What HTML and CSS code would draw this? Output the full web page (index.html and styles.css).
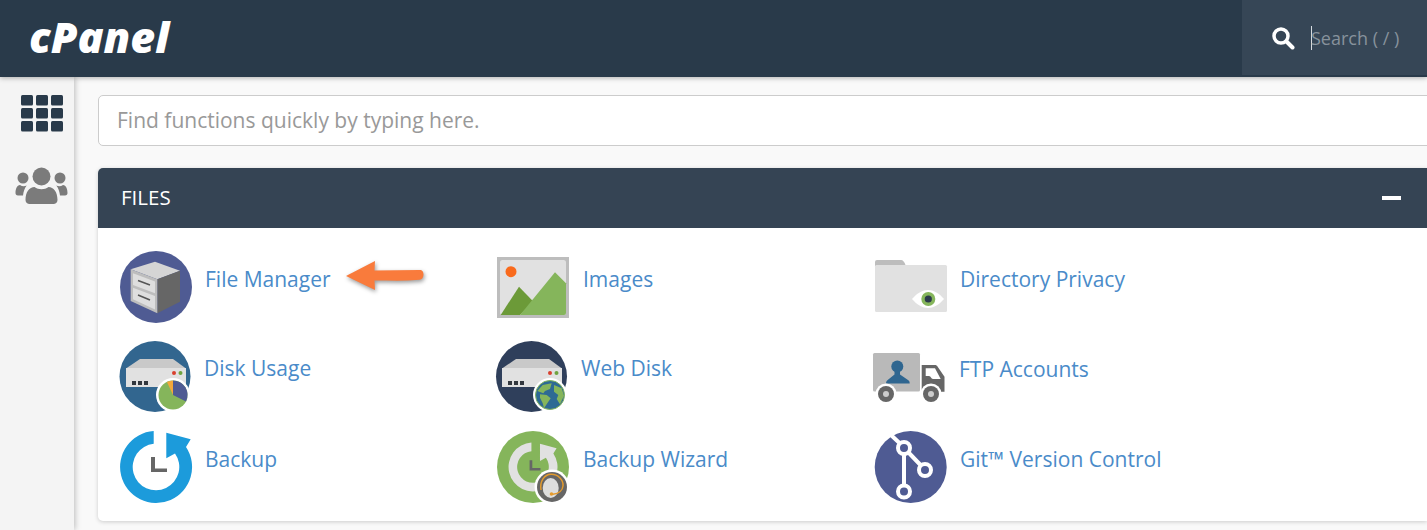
FILE: index.html
```html
<!DOCTYPE html>
<html lang="en">
<head>
<meta charset="utf-8">
<title>cPanel</title>
<link rel="stylesheet" href="styles.css">
</head>
<body>
<svg class="defs" width="0" height="0" aria-hidden="true">
  <defs>
    <g id="server">
      <path fill="#c9c9c9" d="M6 27.5 20 18h33l13 9.500z"/>
      <rect fill="#e1e1e1" x="6" y="27" width="60" height="19"/>
      <rect fill="#33383f" x="12" y="40" width="4" height="4"/>
      <rect fill="#33383f" x="18" y="40" width="4" height="4"/>
      <rect fill="#33383f" x="24" y="40" width="4" height="4"/>
      <circle fill="#d9402e" cx="54" cy="32" r="2"/>
      <circle fill="#6fa33f" cx="60.500" cy="32" r="2"/>
    </g>
    <path id="ring" d="M33.700.1A36 36 0 1 0 66 16l4.700-7.700L46.300 1.700v25.600L55 22.500A23.300 23.300 0 1 1 33.700 12.800z"/>
    <path id="clock" fill="#666" d="M31 26h4v11.500h12V41H31z"/>
  </defs>
</svg>

<header class="topbar">
  <div class="logo">cPanel</div>
  <div class="search">
    <svg class="search-icon" viewBox="0 0 24 24" width="24" height="24"><circle cx="10" cy="10" r="7" fill="none" stroke="#fff" stroke-width="3.500"/><path d="m15.500 15.500 6 6" stroke="#fff" stroke-width="4" stroke-linecap="round"/></svg>
    <input class="search-input" type="text" placeholder="Search ( / )" aria-label="Search">
  </div>
</header>

<div class="layout">
  <nav class="sidebar">
    <svg class="nav-grid" viewBox="0 0 42 37" width="42" height="37">
      <g fill="#293a4a">
        <rect width="12" height="10.500" rx="1.500"/><rect x="15" width="12" height="10.500" rx="1.500"/><rect x="30" width="12" height="10.500" rx="1.500"/>
        <rect y="13" width="12" height="10.500" rx="1.500"/><rect x="15" y="13" width="12" height="10.500" rx="1.500"/><rect x="30" y="13" width="12" height="10.500" rx="1.500"/>
        <rect y="26" width="12" height="10.500" rx="1.500"/><rect x="15" y="26" width="12" height="10.500" rx="1.500"/><rect x="30" y="26" width="12" height="10.500" rx="1.500"/>
      </g>
    </svg>
    <svg class="nav-users" viewBox="0 0 54 38" width="54" height="38">
      <g fill="#7b7b7b">
        <circle cx="26.500" cy="9.500" r="9"/>
        <circle cx="8" cy="11" r="5.500"/>
        <circle cx="45" cy="11" r="5.500"/>
        <path d="M10.500 33c0-8 4-13 9-13 2 1.500 4.500 2.200 7 2.200s5-.7 7-2.200c5 0 9 5 9 13 0 2.500-2 4-4 4H14.500c-2 0-4-1.500-4-4z"/>
        <path d="M8 28.500H3c-1.700 0-2.500-1-2.500-2.500 0-4 1.500-8 4.500-8 1.200.8 2.300 1.200 3.700 1.200 1 0 2-.3 3-.8-2 2.500-3.300 6-3.700 10.100z"/>
        <path d="M45 28.500h5c1.700 0 2.500-1 2.500-2.500 0-4-1.500-8-4.500-8-1.200.8-2.300 1.200-3.700 1.200-1 0-2-.3-3-.8 2 2.500 3.300 6 3.700 10.100z"/>
      </g>
    </svg>
  </nav>

  <main class="content">
    <input class="quick-find" type="text" placeholder="Find functions quickly by typing here." aria-label="Find functions">

    <section class="panel">
      <div class="panel-head">
        <h2 class="panel-title">FILES</h2>
        <span class="collapse"></span>
      </div>
      <div class="panel-body">

        <a class="item" href="#">
          <svg class="icon" viewBox="0 0 72 72" width="72" height="72">
            <circle cx="36" cy="36" r="36" fill="#4f5b93"/>
            <path fill="#d5d5d5" d="M10.700 18.300 35 10.700l25 9-22.700 8.600z"/>
            <path fill="#666" d="m37.300 28.300 22.700-8.600v31L37.300 62.300z"/>
            <path fill="#bdbdbd" d="m10.700 18.300 26.600 10v34L10.700 50z"/>
            <path fill="#dedede" d="m13 22.300 22 8.200v11.700l-22-8.200zM13 36.800l22 8.200v13.500l-22-10.200z"/>
            <path stroke="#555" stroke-width="1.600" d="m18 29.500 12 4.500M18 44l12 5"/>
          </svg>
          <span class="label">File Manager</span>
          <svg class="arrow" viewBox="0 0 84 38" width="84" height="38">
            <path fill="#f97b3c" d="M1 15 30 0l-.5 9.500 45-.5c3 0 4 2 4 4.500 0 3-1.500 5-4 5.300-15 1.400-30 .7-45 .7L30 29z"/>
          </svg>
        </a>

        <a class="item item-mid" href="#">
          <svg class="icon" viewBox="0 0 72 72" width="72" height="72">
            <rect y="6" width="72" height="61" fill="#bdbdbd"/>
            <rect x="3" y="9" width="66" height="55" rx="2.500" fill="#e1e1e1"/>
            <circle cx="14" cy="20.700" r="5.500" fill="#f96a1c"/>
            <path fill="#6c9a38" d="M3.700 64 22 35.700l14.500 15L23 64z"/>
            <path fill="#85b55b" d="M23 64 58 21.300l11 11V62a2 2 0 0 1-2 2z"/>
          </svg>
          <span class="label">Images</span>
        </a>

        <a class="item" href="#">
          <svg class="icon" viewBox="0 0 72 72" width="72" height="72">
            <path fill="#bdbdbd" d="M0 15v-4a2 2 0 0 1 2-2h24c2 0 3.500 2 4.500 5z"/>
            <rect y="14" width="72" height="47" rx="1.500" fill="#e1e1e1"/>
            <path fill="#fff" d="M37 48c5-6 11-9 16-9s11 3 16 9c-5 6-11 9-16 9s-11-3-16-9z"/>
            <circle cx="53.300" cy="48" r="7" fill="#85b55b"/>
            <circle cx="53.300" cy="48" r="3.600" fill="#2b3a4b"/>
          </svg>
          <span class="label">Directory Privacy</span>
        </a>

        <a class="item" href="#">
          <svg class="icon" viewBox="0 0 71 71" width="71" height="71">
            <circle cx="35" cy="35.500" r="35.500" fill="#32668f"/>
            <use href="#server"/>
            <circle cx="53" cy="54" r="17" fill="#fff"/>
            <circle cx="53" cy="54" r="14.500" fill="#85b55b"/>
            <path fill="#4f5b93" d="M53 54V39.500A14.500 14.500 0 0 1 66 60.500z"/>
            <path fill="#f3a83b" d="M53 54 47 41a14.500 14.500 0 0 1 6-1.500z"/>
          </svg>
          <span class="label label-up">Disk Usage</span>
        </a>

        <a class="item item-mid item-left" href="#">
          <svg class="icon" viewBox="0 0 71 71" width="71" height="71">
            <circle cx="35.500" cy="35.500" r="35.500" fill="#2f3f5b"/>
            <use href="#server"/>
            <circle cx="54" cy="54" r="17" fill="#fff"/>
            <circle cx="54" cy="54" r="14.500" fill="#2e6a94" stroke="#85b55b"/>
            <path fill="#85b55b" d="M41.300 50 46.700 44l9-1.700L54 48l-5 2-1.700 2.300zM44 53.300l6.700.7 4 3.300-3.400 5-3.300 5-1.300-5-2.700-5.600zM58 44l7.700 3.300 2.300 7.400-4 8.600-3.300-5.300 1.600-4-4.300-3.300z"/>
          </svg>
          <span class="label label-up">Web Disk</span>
        </a>

        <a class="item item-far" href="#">
          <svg class="icon" viewBox="0 0 72 72" width="72" height="72">
            <rect y="12" width="47" height="38.500" rx="1.500" fill="#b9b9b9"/>
            <circle cx="24.300" cy="25.500" r="6" fill="#2f6690"/>
            <path fill="#2f6690" d="M21.500 29h5.500v4.500l8 5.500c1.500 1 1.700 2 1.700 3.500H13c0-1.500.5-2.500 1.700-3.500l6.800-5.500z"/>
            <path fill="#666" d="M48.700 24H62c1 0 2 .5 2.500 1.500l7 10.200v15H48.700z"/>
            <path fill="#fff" d="M52.700 27.300H62l5.700 10.700H60c-2 0-2-3-4-3h-3.300z"/>
            <circle cx="13" cy="53" r="10.500" fill="#fff"/>
            <circle cx="13" cy="53" r="8" fill="#666"/>
            <circle cx="13" cy="53" r="3" fill="#ccc"/>
            <circle cx="58" cy="53" r="10.500" fill="#fff"/>
            <circle cx="58" cy="53" r="8" fill="#666"/>
            <circle cx="58" cy="53" r="3" fill="#ccc"/>
          </svg>
          <span class="label">FTP Accounts</span>
        </a>

        <a class="item" href="#">
          <svg class="icon" viewBox="0 0 72 72" width="72" height="72">
            <use href="#ring" fill="#1c9bdb"/>
            <use href="#clock"/>
          </svg>
          <span class="label">Backup</span>
        </a>

        <a class="item item-mid" href="#">
          <svg class="icon" viewBox="0 0 72 72" width="72" height="72">
            <circle cx="36" cy="36" r="36" fill="#85b55b"/>
            <g transform="translate(11.500 11.500) scale(.68)">
              <use href="#ring" fill="#e1e1e1"/>
              <use href="#clock"/>
            </g>
            <circle cx="55" cy="56" r="17.500" fill="#fff"/>
            <circle cx="55" cy="56" r="15" fill="#666"/>
            <ellipse cx="53.700" cy="57" rx="8" ry="10" fill="#ddd"/>
            <path d="M44 59c-1.500-9 3.500-15.500 10-15.700 7-.2 12.500 5.500 12 11.500-.3 4.500-4 8-10 8.500" fill="none" stroke="#e39a2d" stroke-width="1.500"/>
            <circle cx="54.500" cy="63" r="1.800" fill="#e39a2d"/>
          </svg>
          <span class="label">Backup Wizard</span>
        </a>

        <a class="item" href="#">
          <svg class="icon" viewBox="0 0 72 72" width="72" height="72">
            <circle cx="35.700" cy="36" r="36" fill="#4f5b93"/>
            <g fill="none" stroke="#fff" stroke-width="4">
              <path d="m16.500 4.500 8.500 8M29 24v30M34 22l11.500 12"/>
              <circle cx="29" cy="17" r="6"/>
              <circle cx="50" cy="39" r="6"/>
              <circle cx="29" cy="60.500" r="6"/>
            </g>
          </svg>
          <span class="label">Git™ Version Control</span>
        </a>

      </div>
    </section>
  </main>
</div>
</body>
</html>
```
FILE: styles.css
```css
* { box-sizing: border-box; }

html, body {
  margin: 0;
  height: 530px;
  overflow: hidden;
}

body {
  font-family: "Open Sans", "Liberation Sans", sans-serif;
  background: #f9f9f9;
  color: #333;
}

.defs { position: absolute; }

.topbar {
  height: 77px;
  background: #293a4a;
  display: flex;
  justify-content: space-between;
  align-items: flex-start;
  position: relative;
  z-index: 2;
  box-shadow: 0 1px 5px rgba(0, 0, 0, .3);
}

.logo {
  margin: 13px 0 0 29px;
  font: italic 800 43px/48px "Open Sans", sans-serif;
  letter-spacing: 0;
  color: #fff;
}

.search {
  width: 185px;
  height: 75px;
  background: #364656;
  display: flex;
  align-items: center;
  padding: 1px 0 0 29px;
  gap: 16px;
}

.search-icon { flex: none; }

.search-input {
  width: 110px;
  height: 24px;
  padding: 0;
  border: 0;
  outline: 0;
  background: linear-gradient(#d6dbe0, #d6dbe0) left top / 1px 100% no-repeat;
  font: 18px/24px "Open Sans", sans-serif;
  color: #fff;
}

.search-input::placeholder { color: #87929c; opacity: 1; }

.layout {
  display: flex;
  height: 453px;
}

.sidebar {
  width: 74px;
  flex: none;
  background: #f4f4f4;
  box-shadow: 1px 0 6px rgba(0, 0, 0, .25);
  display: flex;
  flex-direction: column;
  padding: 18px 0 0 21px;
}

.nav-users { margin: 35px 0 0 -6px; }

.content {
  flex: 1;
  min-width: 0;
  padding: 18px 0 0 24px;
}

.quick-find {
  display: block;
  width: calc(100% + 10px);
  height: 51px;
  padding: 0 18px 2px;
  border: 1px solid #ccc;
  border-radius: 5px;
  background: #fff;
  font: 21px "Open Sans", sans-serif;
  outline: 0;
}

.quick-find::placeholder { color: #999; opacity: 1; }

.panel {
  margin-top: 22px;
  background: #fff;
  border-radius: 5px 0 0 5px;
  box-shadow: 0 1px 4px rgba(0, 0, 0, .18);
}

.panel-head {
  height: 60px;
  background: #354454;
  border-radius: 5px 0 0 0;
  display: flex;
  align-items: center;
  justify-content: space-between;
  padding: 0 26px 0 23px;
}

.panel-title {
  margin: 0 0 2px;
  font-size: 20.500px;
  font-weight: 400;
  color: #fff;
}

.collapse {
  width: 19px;
  height: 4px;
  background: #fff;
}

.panel-body {
  display: grid;
  grid-template-columns: 377px 378px 1fr;
  grid-auto-rows: 72px;
  row-gap: 18px;
  padding: 23px 0 18px 22px;
}

.item {
  display: flex;
  align-items: flex-start;
  gap: 13px;
  position: relative;
  text-decoration: none;
}

.icon { flex: none; overflow: visible; }

.label {
  font-size: 21px;
  line-height: 56px;
  color: #4a8bc9;
  white-space: nowrap;
}

.label-up { line-height: 54px; }

.item-mid { gap: 14px; }
.item-left { margin-left: -1px; }
.item-far { margin-left: -2px; gap: 14px; }

.arrow {
  position: absolute;
  left: 225px;
  top: 10px;
  filter: drop-shadow(1px 2px 2px rgba(0, 0, 0, .4));
}
```
